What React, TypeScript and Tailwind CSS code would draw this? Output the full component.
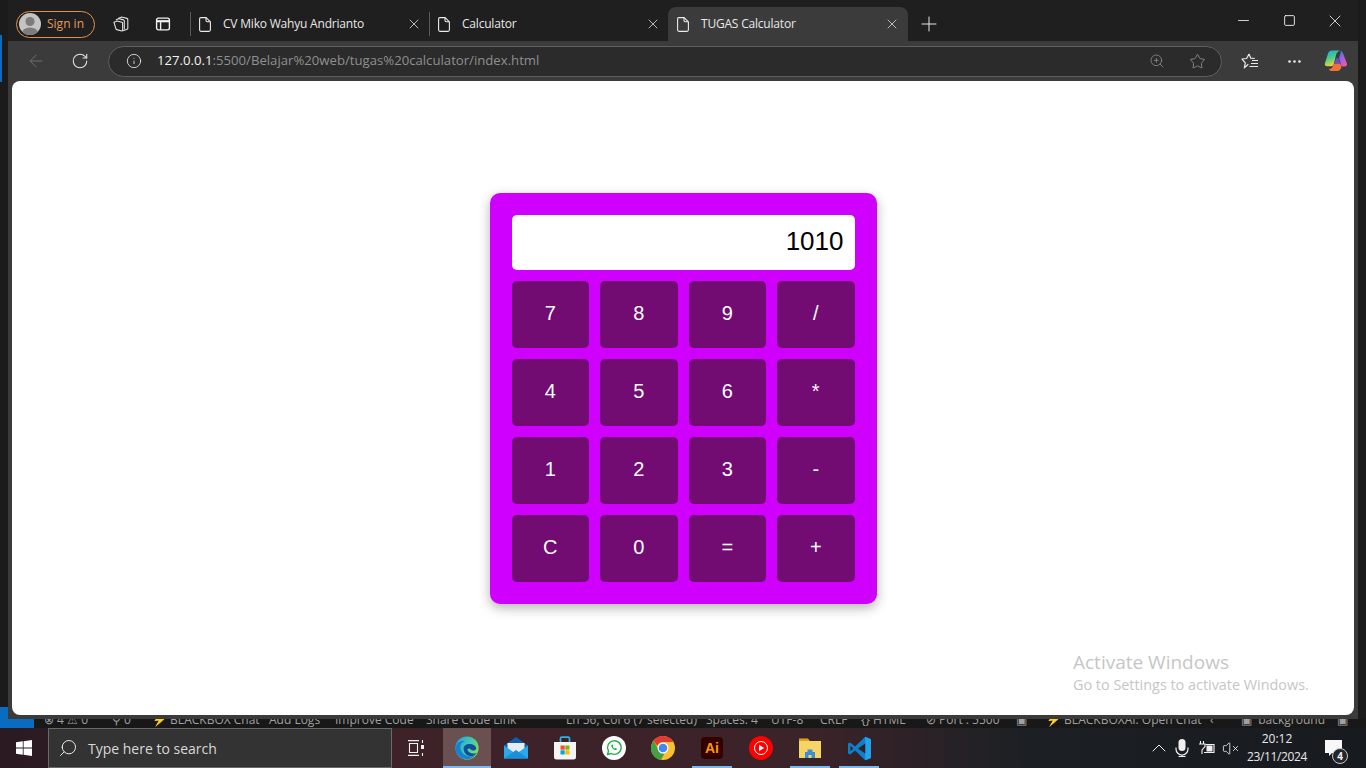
import { ArrowLeft, ChevronUp, Info, Minus, MoreHorizontal, Plus, RotateCw, Search, Square, Star, VolumeX, X, ZoomIn } from 'lucide-react';

const uiFont = "font-['Open_Sans','Noto_Sans',sans-serif]";

const keys = ['7', '8', '9', '/', '4', '5', '6', '*', '1', '2', '3', '-', 'C', '0', '=', '+'];

function DocIcon() {
  return (
    <svg viewBox="0 0 12 15" className="h-[15px] w-[12px] shrink-0" fill="none" stroke="#ececec" strokeWidth="1.1" strokeLinejoin="round">
      <path d="M1.800.6h5.400l4.200 4.200v8a1.600 1.600 0 0 1-1.600 1.600H2.200A1.600 1.600 0 0 1 .6 12.800V1.800A1.200 1.200 0 0 1 1.800.6Z" />
      <path d="M7 .8v2.800a1.200 1.200 0 0 0 1.200 1.200h3" />
    </svg>
  );
}

function TabItem({ title, active, width }: { title: string; active?: boolean; width: string }) {
  return (
    <div className={`flex h-[34px] items-center ${width} ${active ? 'rounded-t-lg bg-[#3b3b3b] pl-[9px] pr-[8px]' : 'pl-[8px] pr-[7px]'}`}>
      <DocIcon />
      <span className={`ml-[12px] flex-1 text-[12px] tracking-[-0.2px] text-[#e8e8e8] ${uiFont}`}>{title}</span>
      <X className="h-[16px] w-[16px] shrink-0 text-[#d0d0d0]" strokeWidth={1.3} />
    </div>
  );
}

function TabStrip() {
  return (
    <div className="flex h-[41px] items-end bg-[#1f1f1f]">
      <div className="flex h-[34px] items-center pl-[8px]">
        <div className="flex h-[27px] w-[79px] items-center rounded-full border border-[#e0924f] pl-[2px]">
          <div className="flex h-[22px] w-[22px] items-center justify-center overflow-hidden rounded-full bg-[#c4c4c4]">
            <svg viewBox="0 0 22 22" className="h-[22px] w-[22px]">
              <circle cx="11" cy="8.500" r="4.600" fill="#7c7c7c" />
              <ellipse cx="11" cy="20" rx="8" ry="5.600" fill="#7c7c7c" />
            </svg>
          </div>
          <span className={`ml-[6px] text-[12px] text-[#e39a5c] ${uiFont}`}>Sign in</span>
        </div>
        <div className="flex w-[52px] justify-center">
          <svg viewBox="0 0 18 18" className="h-[18px] w-[18px]" fill="none" stroke="#e0e0e0" strokeWidth="1.100">
            <path d="M6 3.500 9.500 2 15 3.400a1 1 0 0 1 .8 1v8.800a1 1 0 0 1-.7 1l-4.100 1.600" />
            <path d="M3.800 5 7 3.600l4.600 1.300a1 1 0 0 1 .7 1v8.600" />
            <path d="M2 7.300 5.300 6l4.600 1.300a1 1 0 0 1 .7 1v7.100a.6.6 0 0 1-.8.6l-5-1.400a1.500 1.500 0 0 1-1.100-1.400L2 7.300Z" />
          </svg>
        </div>
        <div className="flex w-[32px] justify-center">
          <svg viewBox="0 0 16 16" className="h-[16px] w-[16px]" fill="none" stroke="#f0f0f0" strokeWidth="1.400">
            <rect x="1.600" y="2.100" width="12.800" height="11.800" rx="1.800" />
            <path d="M1.600 5.200h12.800" strokeWidth="2.200" />
            <path d="M5.600 5.200v8.700" />
          </svg>
        </div>
        <div className="ml-[11px] h-[24px] w-px bg-[#5a5a5a]" />
      </div>
      <TabItem title="CV Miko Wahyu Andrianto" width="w-[238px]" />
      <div className="mb-[5px] h-[24px] w-px self-end bg-[#5a5a5a]" />
      <TabItem title="Calculator" width="w-[238px]" />
      <TabItem title="TUGAS Calculator" active width="w-[240px]" />
      <div className="flex h-[34px] w-[42px] items-center justify-center">
        <Plus className="h-[24px] w-[24px] text-[#e8e8e8]" strokeWidth={1} />
      </div>
      <div className="flex h-[41px] flex-1 items-center justify-end">
        <div className="flex w-[46px] justify-center">
          <Minus className="h-[17px] w-[17px] text-[#f0f0f0]" strokeWidth={1.200} />
        </div>
        <div className="flex w-[46px] justify-center">
          <Square className="h-[13px] w-[13px] text-[#f0f0f0]" strokeWidth={1.700} />
        </div>
        <div className="flex w-[46px] justify-center">
          <X className="h-[20px] w-[20px] text-[#f0f0f0]" strokeWidth={1} />
        </div>
      </div>
    </div>
  );
}

function CopilotLogo() {
  return (
    <svg viewBox="0 0 24 24" className="h-[24px] w-[24px]">
      <defs>
        <linearGradient id="copA" x1="0" y1="0" x2="0.4" y2="1">
          <stop offset="0" stopColor="#2aa0e8" />
          <stop offset="0.5" stopColor="#3dce8e" />
          <stop offset="1" stopColor="#f6d23a" />
        </linearGradient>
        <linearGradient id="copB" x1="0.2" y1="0" x2="0.8" y2="1">
          <stop offset="0" stopColor="#2f7fe8" />
          <stop offset="0.5" stopColor="#b25be0" />
          <stop offset="1" stopColor="#f0589c" />
        </linearGradient>
      </defs>
      <path d="M8 1.500h8c-2 .6-3.400 2.400-4 4.600L9.800 15c-.4 1.600-1.500 2.300-3 2.300H3.200c-1.800 0-2.800-1.300-2.300-3L4 4.500C4.600 2.600 6.200 1.500 8 1.500Z" fill="url(#copA)" />
      <path d="M15.400 1.500c1.800 0 3 .9 3.500 2.500l4 10.500c.5 1.600-.4 3-2.100 3h-3.300l-1.400-5-1-3.500 1.600-5.500c.2-.9-.1-1.800-.8-2Z" fill="url(#copB)" />
      <path d="M9.600 14.400h6.800l1 3.800c-.8 2.300-2 3.800-4 3.800H7.600c-1.800 0-2.600-1-2.600-2.200 2 0 3.400-.8 4-2.800l.6-2.600Z" fill="#f2703c" />
      <path d="M12 9.200h2.600l2 6.800c-.5-1-1.400-1.600-2.600-1.600h-3.600L12 9.200Z" fill="#7a4fe0" opacity="0.850" />
    </svg>
  );
}

function Toolbar() {
  return (
    <div className="flex h-[40px] items-center bg-[#3b3b3b] pl-[4px]">
      <div className="flex w-[48px] justify-center">
        <ArrowLeft className="h-[20px] w-[20px] text-[#6f6f6f]" strokeWidth={1.200} />
      </div>
      <div className="flex w-[40px] justify-center">
        <RotateCw className="h-[18px] w-[18px] text-[#e6e6e6]" strokeWidth={1.400} />
      </div>
      <div className="ml-[8px] flex h-[31px] w-[1114px] items-center rounded-full border border-[#5f5f5f] bg-[#2b2b2b]">
        <div className="flex w-[48px] justify-center pl-[2px]">
          <Info className="h-[16px] w-[16px] text-[#e6e6e6]" strokeWidth={1.300} />
        </div>
        <span className={`flex-1 text-[13.17px] text-[#8f8f8f] ${uiFont}`}>
          <span className="text-[#f2f2f2]">127.0.0.1</span>:5500/Belajar%20web/tugas%20calculator/index.html
        </span>
        <ZoomIn className="mr-[24px] h-[16px] w-[16px] text-[#8a8a8a]" strokeWidth={1.300} />
        <Star className="mr-[15px] h-[17px] w-[17px] text-[#8a8a8a]" strokeWidth={1.300} />
      </div>
      <div className="flex w-[56px] justify-center">
        <svg viewBox="0 0 18 18" className="h-[18px] w-[18px]" fill="none" stroke="#e8e8e8" strokeWidth="1.200" strokeLinejoin="round">
          <path d="M8 2 9.800 6.200l4 .3M7.300 12.200l-4 3.600 1-5L1 7l4.600-.5L8 2" />
          <path d="M11 8.500h6M10 11.500h7M8.500 14.500h8.500" />
        </svg>
      </div>
      <div className="flex w-[32px] justify-center">
        <MoreHorizontal className="h-[17px] w-[17px] text-[#ececec]" strokeWidth={1.800} />
      </div>
      <div className="flex flex-1 justify-center pl-[3px]">
        <CopilotLogo />
      </div>
    </div>
  );
}

function Calculator() {
  return (
    <div className="w-[387px] rounded-[10px] bg-[#d000ff] p-[22px] shadow-[0_4px_12px_rgba(0,0,0,0.3)]">
      <div className="mb-[11px] flex h-[55px] items-center justify-end rounded-[5px] bg-white pb-[1px] pr-[11px] font-['Liberation_Sans',sans-serif] text-[26px] text-black">
        1010
      </div>
      <div className="grid grid-cols-4 gap-[11px]">
        {keys.map((key) => (
          <button
            key={key}
            className="flex h-[67px] items-center justify-center rounded-[5px] bg-[#720b72] pb-[2px] font-['Liberation_Sans',sans-serif] text-[20px] text-white"
          >
            {key}
          </button>
        ))}
      </div>
    </div>
  );
}

function Viewport() {
  return (
    <div className="relative flex flex-1 items-center justify-center rounded-lg bg-white">
      <Calculator />
      <div className={`absolute left-[1061px] top-[568px] text-[#c6c6c6] ${uiFont}`}>
        <div className="text-[19px] leading-[26px]">Activate Windows</div>
        <div className="text-[14.4px] leading-[20px]">Go to Settings to activate Windows.</div>
      </div>
    </div>
  );
}

function StatusStrip() {
  // only the lower half of these labels shows under the browser window
  const text = "absolute bottom-[1px] whitespace-nowrap text-[12px] leading-[15px] text-[#a0a0a0] " + uiFont;
  return (
    <div className="relative h-[9px] overflow-hidden bg-[#181818]">
      <div className="h-[9px] w-[34px] bg-[#0a6cc0]" />
      <span className={`${text} left-[44px]`}>⊗ 4 ⚠ 0</span>
      <span className={`${text} left-[112px]`}>⚲ 0</span>
      <span className={`${text} left-[152px]`}><span className="text-[#d8a030]">⚡</span> BLACKBOX Chat</span>
      <span className={`${text} left-[269px]`}>Add Logs</span>
      <span className={`${text} left-[335px]`}>Improve Code</span>
      <span className={`${text} left-[426px]`}>Share Code Link</span>
      <span className={`${text} left-[566px]`}>Ln 56, Col 6 (7 selected)</span>
      <span className={`${text} left-[706px]`}>Spaces: 4</span>
      <span className={`${text} left-[771px]`}>UTF-8</span>
      <span className={`${text} left-[820px]`}>CRLF</span>
      <span className={`${text} left-[861px]`}>{'{}'} HTML</span>
      <span className={`${text} left-[926px]`}>⊘ Port : 5500</span>
      <span className={`${text} left-[1016px]`}>▣</span>
      <span className={`${text} left-[1046px]`}><span className="text-[#d8a030]">⚡</span> BLACKBOXAI: Open Chat</span>
      <span className={`${text} left-[1210px]`}>‹</span>
      <span className={`${text} left-[1241px]`}>▣&nbsp;&nbsp;background</span>
      <span className={`${text} left-[1337px]`}>▣</span>
    </div>
  );
}

function WindowsLogo() {
  return (
    <svg viewBox="0 0 16 16" className="h-[16px] w-[16px]" fill="#ffffff">
      <path d="M0 2.300 6.800 1.300V7.600H0ZM7.600 1.200 16 0V7.600H7.600ZM0 8.400H6.800V14.700L0 13.700ZM7.600 8.400H16V16L7.600 14.800Z" />
    </svg>
  );
}

function EdgeLogo() {
  return (
    <svg viewBox="0 0 24 24" className="h-[24px] w-[24px]">
      <defs>
        <linearGradient id="edgeTop" x1="0" y1="0" x2="1" y2="0.600">
          <stop offset="0" stopColor="#1f9fe6" />
          <stop offset="0.550" stopColor="#3ec8b0" />
          <stop offset="1" stopColor="#7fdc62" />
        </linearGradient>
      </defs>
      <circle cx="12" cy="12" r="11.600" fill="url(#edgeTop)" />
      <path d="M.6 12C1.200 6.500 6.200 4 10 5.500c-3.600.6-5.400 3.600-4.400 7.400 1 4 5.400 8 10.600 7.400 1.600-.2 3-.7 4.200-1.600-2 3-5.200 4.400-8.600 4.400C5.600 23.100.4 18 .6 12Z" fill="#1680d6" />
      <path d="M8.600 13c0-3.400 2.700-5 5.800-5 3.600 0 6.600 1.800 6.800 4.200.1 1.500-1.400 2.400-3.200 2.400-1.800 0-1.900-1.600-3.700-2-1.600-.3-2.200.8-1.600 2 .8 1.600 3 3 5.400 3 1.400 0 2.800-.3 3.800-.9-1.600 2.800-4.800 3.600-7 3.300-3.800-.5-6.300-3.800-6.300-7Z" fill="#0f4f9e" />
    </svg>
  );
}

function MailLogo() {
  return (
    <svg viewBox="0 0 24 24" className="h-[24px] w-[24px]">
      <path d="M0 9.500 12 1l12 8.500V12H0Z" fill="#0e5fae" />
      <path d="M3.500 7h17v9h-17Z" fill="#e8ecf0" />
      <path d="M0 9.500 12 18 24 9.500V22.500H0Z" fill="#2aa8ec" />
      <path d="M0 22.500 12 14l12 8.500Z" fill="#1c8fda" />
    </svg>
  );
}

function StoreLogo() {
  return (
    <svg viewBox="0 0 24 24" className="h-[24px] w-[24px]">
      <path d="M7.500 6V2.600a1.500 1.500 0 0 1 1.500-1.500h6a1.500 1.500 0 0 1 1.500 1.500V6" fill="none" stroke="#2bb4ea" strokeWidth="1.700" />
      <path d="M1 6h22v15a2.500 2.500 0 0 1-2.500 2.500h-17A2.500 2.500 0 0 1 1 21Z" fill="#f4f4f4" />
      <rect x="7.500" y="9.500" width="4.200" height="4.200" fill="#f25022" />
      <rect x="12.300" y="9.500" width="4.200" height="4.200" fill="#7fba00" />
      <rect x="7.500" y="14.300" width="4.200" height="4.200" fill="#00a4ef" />
      <rect x="12.300" y="14.300" width="4.200" height="4.200" fill="#ffb900" />
    </svg>
  );
}

function WhatsappLogo() {
  return (
    <svg viewBox="0 0 24 24" className="h-[24px] w-[24px]">
      <circle cx="12" cy="12" r="12" fill="#ffffff" />
      <path d="M5.500 18.500 6.500 15a6.800 6.800 0 1 1 2.600 2.500Z" fill="none" stroke="#25b04a" strokeWidth="1.400" strokeLinejoin="round" />
      <path d="M9.800 8.600c-.8.700-.7 2 .4 3.400 1.200 1.500 2.700 2.300 3.800 2 .7-.2 1.200-.8 1-1.300l-1.500-.8-.7.700c-.8-.2-1.700-1.100-2-2l.6-.7-.7-1.500Z" fill="#25b04a" />
    </svg>
  );
}

function ChromeLogo() {
  return (
    <svg viewBox="0 0 24 24" className="h-[24px] w-[24px]">
      <circle cx="12" cy="12" r="12" fill="#fbc02d" />
      <path d="M12 0A12 12 0 0 1 22.400 6H12a6 6 0 0 0-5.700 4.100L2.400 4.800A12 12 0 0 1 12 0Z" fill="#e53935" />
      <path d="M2.400 4.800 7.500 13.500a6 6 0 0 0 5.900 4.300L10 24A12 12 0 0 1 2.400 4.800Z" fill="#43a047" />
      <circle cx="12" cy="12" r="5.500" fill="#ffffff" />
      <circle cx="12" cy="12" r="4.300" fill="#4285f4" />
    </svg>
  );
}

function VscodeLogo() {
  return (
    <svg viewBox="0 0 24 24" className="h-[25px] w-[25px]">
      <path d="M17.500.8 7.800 10 3 6.200 1 7.300v9.400l2 1.100 4.800-3.800 9.700 9.200 5.500-2.200V3Z" fill="#0f7fcc" />
      <path d="M17.500.8 23 3v18l-5.500 2.200Z" fill="#23a3ee" />
      <path d="M17.500 7.200 10.600 12l6.900 4.800ZM3.300 9.300v5.400L6 12Z" fill="#2c2226" />
    </svg>
  );
}

function TaskIcon({ active, running, children }: { active?: boolean; running?: boolean; children: React.ReactNode }) {
  return (
    <div className={`relative flex h-[40px] items-center justify-center ${active ? 'mr-[1px] w-[48px] bg-[#6b5052]' : 'w-[49px] pr-[1px]'}`}>
      {children}
      {(active || running) && <div className={`absolute bottom-0 h-[2px] bg-[#76b9ed] ${active ? 'inset-x-0' : 'left-[4px] right-[5px]'}`} />}
    </div>
  );
}

function Taskbar() {
  return (
    <div className="flex h-[40px] items-center bg-[linear-gradient(90deg,#2a1a22_0%,#3d2228_30%,#3a2329_60%,#1c2024_75%,#171b20_100%)]">
      <div className="flex h-[40px] w-[48px] items-center justify-center">
        <WindowsLogo />
      </div>
      <div className="flex h-[40px] w-[344px] items-center border border-[#6a6a6a] bg-[#333333] pl-[9px]">
        <Search className="h-[20px] w-[20px] -scale-x-100 text-[#e8e8e8]" strokeWidth={1.200} />
        <span className={`ml-[10px] text-[14px] text-[#d8d8d8] ${uiFont}`}>Type here to search</span>
      </div>
      <div className="flex w-[51px] justify-center pr-[3px]">
        <svg viewBox="0 0 16 16" className="h-[16px] w-[16px]" fill="none" stroke="#f0f0f0" strokeWidth="1.100">
          <path d="M0 .6h11M0 15.400h11M1.500 3.500h8v9h-8Z" />
          <path d="M14.500 0v3M14.500 13v3" />
          <path d="M13 5h3v4h-3Z" fill="#f0f0f0" stroke="none" />
        </svg>
      </div>
      <TaskIcon active>
        <EdgeLogo />
      </TaskIcon>
      <TaskIcon>
        <MailLogo />
      </TaskIcon>
      <TaskIcon>
        <StoreLogo />
      </TaskIcon>
      <TaskIcon>
        <WhatsappLogo />
      </TaskIcon>
      <TaskIcon>
        <ChromeLogo />
      </TaskIcon>
      <TaskIcon running>
        <div className="flex h-[22px] w-[22px] items-center justify-center rounded-[4px] bg-[#300] font-['Liberation_Sans',sans-serif] text-[14px] font-bold text-[#ff9a00]">
          Ai
        </div>
      </TaskIcon>
      <TaskIcon>
        <svg viewBox="0 0 24 24" className="h-[24px] w-[24px]">
          <circle cx="12" cy="12" r="12" fill="#ff0000" />
          <circle cx="12" cy="12" r="6.500" fill="none" stroke="#ffffff" strokeWidth="1" />
          <path d="M10 8.800v6.400l5.200-3.200Z" fill="#ffffff" />
        </svg>
      </TaskIcon>
      <TaskIcon running>
        <svg viewBox="0 0 24 24" className="h-[24px] w-[24px]">
          <path d="M1 2.500h9l2 2.500h-11Z" fill="#d9a520" />
          <path d="M1 5h22v17H1Z" fill="#f6d566" />
          <path d="M7 22v-6h2.500v-2.500h5V16H17v6h-3.500v-3h-3v3Z" fill="#3a8fd6" />
        </svg>
      </TaskIcon>
      <TaskIcon running>
        <VscodeLogo />
      </TaskIcon>
      <div className="flex-1" />
      <ChevronUp className="h-[24px] w-[24px] text-[#f0f0f0]" strokeWidth={1} />
      <svg viewBox="0 0 18 18" className="ml-[2px] h-[18px] w-[18px]" fill="none" stroke="#f0f0f0" strokeWidth="1.200">
        <rect x="5.500" y="0" width="7" height="12" rx="3.500" fill="#f0f0f0" stroke="none" />
        <path d="M3 8.500v1.500a6 6 0 0 0 12 0V8.500M9 16v1.500M5.500 17.500h7" />
      </svg>
      <svg viewBox="0 0 18 14" className="ml-[7px] h-[14px] w-[18px]" fill="none" stroke="#f0f0f0" strokeWidth="1.100">
        <path d="M2.500 0v3M5.500 0v3M1 3h6v2.500L4 9v4" />
        <path d="M7.500 3.500H16v8H6" />
        <path d="M8.500 4.500h6v6h-6Z" fill="#f0f0f0" stroke="none" />
      </svg>
      <VolumeX className="ml-[6px] h-[17px] w-[17px] text-[#f0f0f0]" strokeWidth={1.200} />
      <div className={`ml-[3px] flex w-[70px] flex-col items-center text-[12px] leading-[18px] text-[#e8e8e8] ${uiFont}`}>
        <span>20:12</span>
        <span className="tracking-[-0.35px]">23/11/2024</span>
      </div>
      <div className="relative ml-[13px] mr-[17px] h-[24px] w-[24px]">
        <svg viewBox="0 0 17 16" className="mt-[4px] h-[16px] w-[17px]" fill="#f8f8f8">
          <path d="M0 0h17v13H7l-3 3v-3H0Z" />
        </svg>
        <div className={`absolute left-[7px] top-[12px] flex h-[16px] w-[16px] items-center justify-center rounded-full border border-[#c8c8c8] bg-[#24282c] text-[10px] font-bold text-[#f4f4f4] ${uiFont}`}>
          4
        </div>
      </div>
    </div>
  );
}

export default function App() {
  return (
    <div className="flex h-screen w-screen flex-col overflow-hidden bg-[#181818]">
      <div className="flex h-[719px]">
        {/* left edge of the editor behind the browser */}
        <div className="flex w-[8px] flex-col bg-[#1b1b1b]">
          <div className="h-[35px]" />
          <div className="h-[47px] w-[2px] bg-[#0a6cc0]" />
          <div className="flex-1" />
          <div className="h-[12px] bg-[#0a6cc0]" />
        </div>
        <div className="flex w-[1350px] flex-col">
          <TabStrip />
          <Toolbar />
          <div className="flex flex-1 flex-col bg-[#3b3b3b] px-[4px] pb-[4px]">
            <Viewport />
          </div>
        </div>
        <div className="w-[8px] bg-[#1b1b1b]" />
      </div>
      <StatusStrip />
      <Taskbar />
    </div>
  );
}
